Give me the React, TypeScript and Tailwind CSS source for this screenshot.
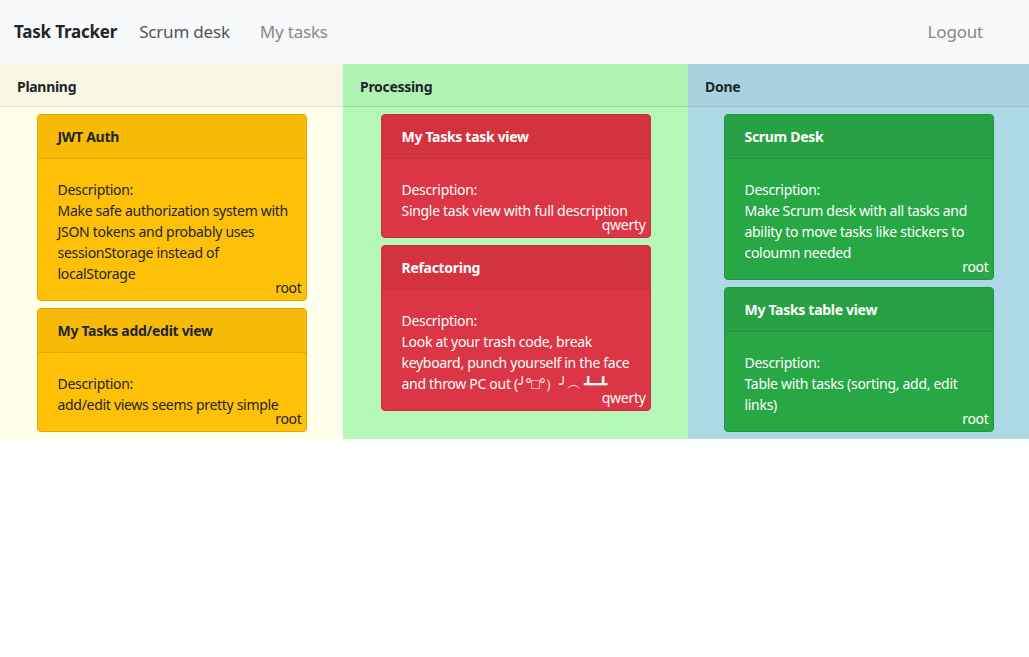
import React from 'react';

interface Task {
  id: number;
  title: string;
  description: string;
  author: string;
}

interface Column {
  name: string;
  headerBg: string;
  bodyBg: string;
  headerBorder: string;
  card: string;
  cardHeader: string;
  tasks: Task[];
}

const columns: Column[] = [
  {
    name: 'Planning',
    headerBg: 'bg-[#f7f7e4]',
    bodyBg: 'bg-[#ffffeb]',
    headerBorder: 'border-[#dedecd]',
    card: 'bg-[#ffc107] border-[#e0aa06] text-[#212529]',
    cardHeader: 'bg-[#f7bb07] border-[#e0aa06]',
    tasks: [
      {
        id: 1,
        title: 'JWT Auth',
        description: 'Make safe authorization system with JSON tokens and probably uses sessionStorage instead of localStorage',
        author: 'root',
      },
      {
        id: 2,
        title: 'My Tasks add/edit view',
        description: 'add/edit views seems pretty simple',
        author: 'root',
      },
    ],
  },
  {
    name: 'Processing',
    headerBg: 'bg-[#b0f3b5]',
    bodyBg: 'bg-[#b5f8b9]',
    headerBorder: 'border-[#9edba2]',
    card: 'bg-[#dc3545] border-[#c22f3d] text-white',
    cardHeader: 'bg-[#d5323f] border-[#c22f3d]',
    tasks: [
      {
        id: 3,
        title: 'My Tasks task view',
        description: 'Single task view with full description',
        author: 'qwerty',
      },
      {
        id: 4,
        title: 'Refactoring',
        description: 'Look at your trash code, break keyboard, punch yourself in the face and throw PC out (╯°□°）╯︵ ┻━┻',
        author: 'qwerty',
      },
    ],
  },
  {
    name: 'Done',
    headerBg: 'bg-[#a8d2df]',
    bodyBg: 'bg-[#add8e6]',
    headerBorder: 'border-[#98bdca]',
    card: 'bg-[#28a745] border-[#23933d] text-white',
    cardHeader: 'bg-[#27a143] border-[#23933d]',
    tasks: [
      {
        id: 5,
        title: 'Scrum Desk',
        description: 'Make Scrum desk with all tasks and ability to move tasks like stickers to coloumn needed',
        author: 'root',
      },
      {
        id: 6,
        title: 'My Tasks table view',
        description: 'Table with tasks (sorting, add, edit links)',
        author: 'root',
      },
    ],
  },
];

const TaskCard: React.FC<{ task: Task; col: Column }> = ({ task, col }) => (
  <div className={`w-[270px] mx-auto border rounded ${col.card}`}>
    <div className={`px-5 py-[11px] border-b font-bold ${col.cardHeader}`}>{task.title}</div>
    <div className="relative pl-5 pr-3 pt-5 pb-4">
      <p>
        Description:
        <br />
        {task.description}
      </p>
      <span className="absolute right-1 bottom-0.5 leading-5">{task.author}</span>
    </div>
  </div>
);

export default function App() {
  return (
    <div
      className="min-h-screen bg-white text-[14px] leading-[21px] tracking-[-0.3px] text-[#212529]"
      style={{ fontFamily: '"Noto Sans", "Open Sans", sans-serif' }}
    >
      <nav className="h-16 bg-[#f8f9fa] flex items-center pl-[14px] pr-[46px] pb-[2px] text-[17px] tracking-[-0.2px]">
        <span className="font-bold text-[#212529] mr-[22px]">Task Tracker</span>
        <a className="text-[#555] mr-[30px]">Scrum desk</a>
        <a className="text-[#888]">My tasks</a>
        <a className="ml-auto text-[#888]">Logout</a>
      </nav>

      <div className="grid grid-cols-[343px_345px_1fr]">
        {columns.map((col) => (
          <div key={col.name} className={`${col.bodyBg} pb-[7px]`}>
            <div className={`${col.headerBg} border-b ${col.headerBorder} h-[43px] flex items-center pt-[2px] pl-[17px] font-bold`}>
              {col.name}
            </div>
            <div className="flex flex-col gap-[7px] pt-[7px]">
              {col.tasks.map((t) => (
                <TaskCard key={t.id} task={t} col={col} />
              ))}
            </div>
          </div>
        ))}
      </div>
    </div>
  );
}
